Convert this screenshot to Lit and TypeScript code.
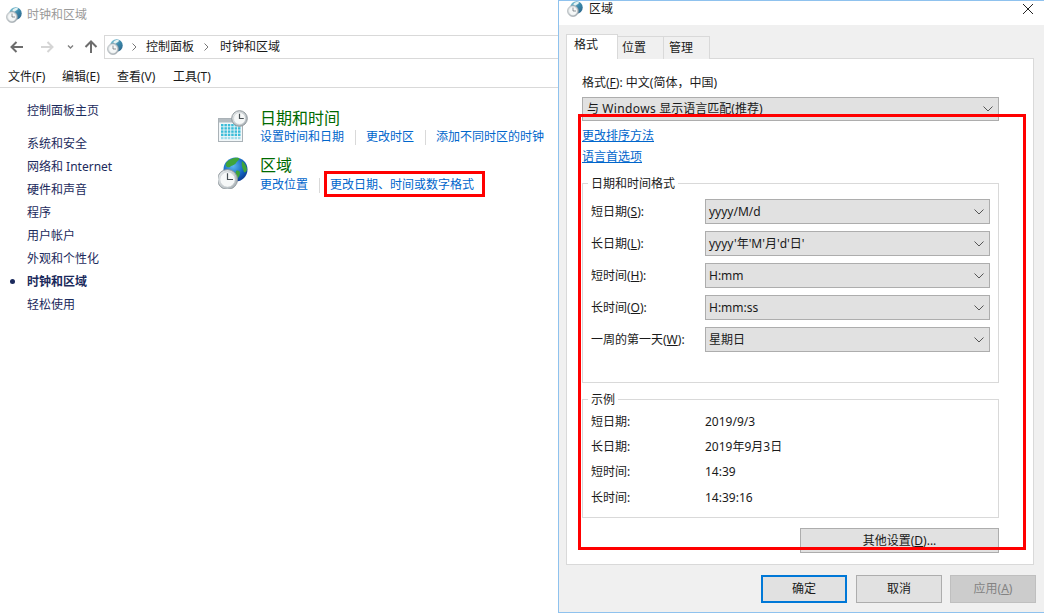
import { LitElement, html, css, svg } from "lit";
import { customElement } from "lit/decorators.js";

const clock = (cx: number, cy: number, r: number) => svg`
  <circle cx=${cx} cy=${cy} r=${r} fill="url(#face)" stroke="#8f979c" stroke-width="1"/>
  <circle cx=${cx} cy=${cy} r=${r * 0.76} fill="#f6f8f8" stroke="#c9cfd2" stroke-width=".6"/>
  <path d="M${cx} ${cy - r * 0.62}V${cy}H${cx + r * 0.55}" fill="none" stroke="#474f54" stroke-width="1.2"/>`;

const defs = svg`<defs>
  <linearGradient id="face" x1="0" y1="0" x2="1" y2="1"><stop offset="0" stop-color="#eef1f2"/><stop offset="1" stop-color="#a2abb0"/></linearGradient>
  <radialGradient id="globe" cx=".4" cy=".35" r=".75"><stop offset="0" stop-color="#5db7f0"/><stop offset=".6" stop-color="#1466c0"/><stop offset="1" stop-color="#0a2f86"/></radialGradient>
  <linearGradient id="teal" x1="0" y1="0" x2="1" y2="1"><stop offset="0" stop-color="#8fd0de"/><stop offset=".55" stop-color="#3a86a8"/><stop offset="1" stop-color="#2a5f86"/></linearGradient>
</defs>`;

const globeIcon = html`<svg width="32" height="32" viewBox="0 0 32 32">
  ${defs}
  <circle cx="17.500" cy="12.500" r="12" fill="url(#globe)"/>
  <path d="M8 6c3-4 9-6 13-5 1 2-2 3-3 5-2 3-5 2-6 4-2 1-5 0-4-4zM24 4c3 2 5 6 5 9-1 2-2 3-3 2-1-3-3-6-2-11zM18 14c2-1 4 0 4 2 0 3-2 5-3 6-2-2-2-5-1-8z" fill="#3fa53a"/>
  ${clock(9.500, 22.500, 10)}
</svg>`;

const calendarIcon = html`<svg width="32" height="32" viewBox="0 0 32 32">
  ${defs}
  <rect x=".5" y="8.500" width="24" height="23" fill="#f2f7f9" stroke="#aab2b7"/>
  <rect x="1" y="9" width="23" height="3.500" fill="#b4bcc1"/>
  ${[0, 1, 2, 3, 4].map((r) =>
    [0, 1, 2, 3, 4, 5].map(
      (c) => svg`<rect x=${3 + c * 3.4} y=${14 + r * 3.2} width="2.500" height="2.400" fill=${r === 4 ? "#9fdcea" : "#3bbcd8"}/>`
    )
  )}
  ${clock(21.500, 8.500, 7.800)}
</svg>`;

const smallClockGlobe = html`<svg width="16" height="16" viewBox="0 0 32 32">
  ${defs}
  <circle cx="19" cy="13" r="12.500" fill="url(#teal)"/>
  <path d="M13 6c3-4 8-5 11-3 0 3-5 4-6 6-3 1-6-1-5-3z" fill="#e4f2f2"/>
  ${clock(12, 20, 11)}
</svg>`;

const chevron = html`<svg class="chev" width="10" height="6" viewBox="0 0 10 6"><path d="M.5.500 5 5 9.500.500" fill="none" stroke="#555" stroke-width="1"/></svg>`;

const combo = (text: string) => html`<div class="combo"><span>${text}</span>${chevron}</div>`;

@customElement("app-root")
export class AppRoot extends LitElement {
  static styles = css`
    :host {
      display: block;
      position: relative;
      width: 1044px;
      height: 614px;
      overflow: hidden;
      background: #fff;
      font: 12px/16px "Noto Sans", "Noto Sans CJK SC", sans-serif;
      color: #1a1a1a;
    }
    u { text-underline-offset: 1px; }
    .win { position: absolute; left: 0; top: 0; width: 559px; height: 614px; display: flex; flex-direction: column; overflow: hidden; }
    .title { height: 30px; display: flex; align-items: center; gap: 5px; padding-left: 6px; color: #9a9a9a; }
    .nav { height: 24px; margin-top: 5px; display: flex; align-items: center; }
    .nb { width: 104px; height: 24px; flex: none; display: flex; align-items: center; }
    .nb svg { display: block; }
    .addr { flex: 1; margin-right: -20px; height: 24px; box-sizing: border-box; border: 1px solid #d9d9d9; display: flex; align-items: center; padding-left: 2px; }
    .addr svg { display: block; flex: none; }
    .addr .s1 { margin: 0 9px 0 9px; }
    .addr .s2 { margin: 0 11px 0 10px; }
    .menu { height: 29px; box-sizing: border-box; border-bottom: 1px solid #d9d9d9; display: flex; align-items: center; padding: 8px 0 0 8px; }
    .menu span { display: block; }
    .menu span:nth-child(1) { width: 54px; }
    .menu span:nth-child(2) { width: 55px; }
    .menu span:nth-child(3) { width: 56px; }
    .body { flex: 1; display: flex; }
    .side { width: 218px; flex: none; padding: 11px 0 0 27px; box-sizing: border-box; color: #1b2a5c; }
    .side div { height: 23px; line-height: 23px; position: relative; }
    .side .home { margin-bottom: 10px; }
    .side .cur { font-weight: 700; }
    .side .cur::before { content: ""; position: absolute; left: -17px; top: 9px; width: 5px; height: 5px; border-radius: 50%; background: #1b2a5c; }
    .main { padding-top: 19px; }
    .task { display: flex; height: 47px; }
    .task .ic { width: 43px; flex: none; padding-top: 3px; margin-right: -1px; }
    .task svg { display: block; }
    .task h2 { margin: 0; font-size: 16px; line-height: 22px; font-weight: 400; color: #006a00; }
    .links { display: flex; align-items: center; height: 16px; color: #0066cc; }
    .links.low { margin-top: 1px; }
    .links i { width: 1px; height: 15px; background: #d9d9d9; margin: 0 10px 0 11px; }

    .dlg { position: absolute; left: 558px; top: 0; width: 500px; height: 613px; box-sizing: border-box; border: 1px solid #8fc2ee; background: #f0f0f0; }
    .dt { height: 24px; background: #fff; display: flex; gap: 6px; padding-left: 8px; position: relative; line-height: 16px; }
    .dt svg { display: block; }
    .dt .close { position: absolute; left: 464px; top: 3px; }
    .tabs { display: flex; align-items: flex-end; padding: 9px 0 0 7px; height: 25px; position: relative; z-index: 1; margin-bottom: -1px; }
    .tab { box-sizing: border-box; width: 47px; height: 23px; border: 1px solid #d9d9d9; border-bottom: 0; margin-left: -1px; padding-left: 5px; line-height: 22px; background: #f0f0f0; }
    .tab.on { height: 25px; background: #fff; margin-left: 0; width: 52px; padding-left: 7px; line-height: 20px; position: relative; z-index: 1; }
    .tab.p { padding-left: 4px; }
    .panel { width: 468px; height: 507px; margin-left: 7px; box-sizing: border-box; border: 1px solid #d9d9d9; background: #fff; padding: 14px 34px 0 15px; display: flex; flex-direction: column; }
    .lbl { height: 20px; line-height: 20px; }
    .combo { box-sizing: border-box; height: 25px; border: 1px solid #adadad; background: #e1e1e1; display: flex; align-items: center; justify-content: space-between; padding: 0 3px; }
    .combo .chev { margin-right: 2px; display: block; }
    .combo.mc { height: 24px; margin-top: 4px; margin-bottom: 5px; padding-left: 4px; }
    .wide { letter-spacing: .4px; }
    .a { height: 20px; line-height: 20px; color: #0066cc; text-decoration: underline; margin-bottom: 1px; width: fit-content; }
    .group { box-sizing: border-box; width: 417px; border: 1px solid #d9d9d9; padding-left: 8px; }
    .g1 { height: 200px; margin-top: 15px; }
    .g2 { height: 119px; margin-top: 16px; }
    .legend { height: 20px; line-height: 20px; margin: -10px 0 0 -3px; padding: 0 3px; background: #fff; width: fit-content; }
    .fields { display: grid; grid-template-columns: 114px 285px; grid-auto-rows: 25px; row-gap: 7px; margin-top: 5px; align-items: center; }
    .vals { display: grid; grid-template-columns: 114px 1fr; grid-auto-rows: 25.3px; margin-top: -1px; align-items: center; }
    .btn { box-sizing: border-box; display: flex; align-items: center; justify-content: center; border: 1px solid #adadad; background: #e1e1e1; }
    .more { width: 199px; height: 25px; margin: 10px 0 0 218px; flex: none; }
    .foot { display: flex; gap: 9px; padding: 10px 0 0 202px; }
    .foot .btn { width: 86px; height: 28px; }
    .foot .ok { border: 2px solid #0078d7; }
    .foot .off { margin-left: -1px; background: #ccc; border-color: #bfbfbf; color: #838383; }

    .mark { position: absolute; box-sizing: border-box; border: 3px solid #f00; }
    .m1 { left: 324px; top: 171px; width: 161px; height: 26px; }
    .m2 { left: 578px; top: 114px; width: 448px; height: 436px; }
  `;

  render() {
    const side = ["系统和安全", "网络和 Internet", "硬件和声音", "程序", "用户帐户", "外观和个性化"];
    return html`
      <div class="win">
        <div class="title">${smallClockGlobe}<span>时钟和区域</span></div>
        <div class="nav">
          <div class="nb">
            <svg width="104" height="24" viewBox="0 0 104 24">
              <path d="M11.500 12h11.500M16.500 7l-5 5 5 5" fill="none" stroke="#6d6d6d" stroke-width="2"/>
              <path d="M41 12h11.500M47.500 7l5 5-5 5" fill="none" stroke="#d5d5d5" stroke-width="2"/>
              <path d="M68 10.500 70.500 13l2.500-2.500" fill="none" stroke="#808080" stroke-width="1.400"/>
              <path d="M91 18V6.500M85.500 12 91 6.500l5.500 5.500" fill="none" stroke="#6d6d6d" stroke-width="2"/>
            </svg>
          </div>
          <div class="addr">
            ${smallClockGlobe}
            <svg class="s1" width="5" height="8" viewBox="0 0 5 8"><path d="M.5.500 4 4 .5 7.500" fill="none" stroke="#777"/></svg>
            <span>控制面板</span>
            <svg class="s2" width="5" height="8" viewBox="0 0 5 8"><path d="M.5.500 4 4 .5 7.500" fill="none" stroke="#777"/></svg>
            <span>时钟和区域</span>
          </div>
        </div>
        <div class="menu"><span>文件(F)</span><span>编辑(E)</span><span>查看(V)</span><span>工具(T)</span></div>
        <div class="body">
          <div class="side">
            <div class="home">控制面板主页</div>
            ${side.map((s) => html`<div>${s}</div>`)}
            <div class="cur">时钟和区域</div>
            <div>轻松使用</div>
          </div>
          <div class="main">
            <div class="task">
              <div class="ic">${calendarIcon}</div>
              <div>
                <h2>日期和时间</h2>
                <div class="links"><span>设置时间和日期</span><i></i><span>更改时区</span><i></i><span>添加不同时区的时钟</span></div>
              </div>
            </div>
            <div class="task">
              <div class="ic">${globeIcon}</div>
              <div>
                <h2>区域</h2>
                <div class="links low"><span>更改位置</span><i></i><span>更改日期、时间或数字格式</span></div>
              </div>
            </div>
          </div>
        </div>
      </div>

      <div class="dlg">
        <div class="dt">
          <span>${smallClockGlobe}</span><span>区域</span>
          <svg class="close" width="10" height="10" viewBox="0 0 10 10"><path d="M0 0l10 10M10 0 0 10" stroke="#222" stroke-width="1"/></svg>
        </div>
        <div class="tabs">
          <div class="tab on">格式</div>
          <div class="tab p">位置</div>
          <div class="tab">管理</div>
        </div>
        <div class="panel">
          <div class="lbl">格式(<u>F</u>): 中文(简体，中国)</div>
          <div class="combo mc"><span>与 <span class="wide">Windows</span> 显示语言匹配(推荐)</span>${chevron}</div>
          <div class="a">更改排序方法</div>
          <div class="a">语言首选项</div>
          <div class="group g1">
            <div class="legend">日期和时间格式</div>
            <div class="fields">
              <span>短日期(<u>S</u>):</span>${combo("yyyy/M/d")}
              <span>长日期(<u>L</u>):</span>${combo("yyyy'年'M'月'd'日'")}
              <span>短时间(<u>H</u>):</span>${combo("H:mm")}
              <span>长时间(<u>O</u>):</span>${combo("H:mm:ss")}
              <span>一周的第一天(<u>W</u>):</span>${combo("星期日")}
            </div>
          </div>
          <div class="group g2">
            <div class="legend">示例</div>
            <div class="vals">
              <span>短日期:</span><span>2019/9/3</span>
              <span>长日期:</span><span>2019年9月3日</span>
              <span>短时间:</span><span>14:39</span>
              <span>长时间:</span><span>14:39:16</span>
            </div>
          </div>
          <div class="btn more"><span>其他设置(<u>D</u>)...</span></div>
        </div>
        <div class="foot">
          <div class="btn ok">确定</div>
          <div class="btn">取消</div>
          <div class="btn off">应用(<u>A</u>)</div>
        </div>
      </div>

      <div class="mark m1"></div>
      <div class="mark m2"></div>
    `;
  }
}
